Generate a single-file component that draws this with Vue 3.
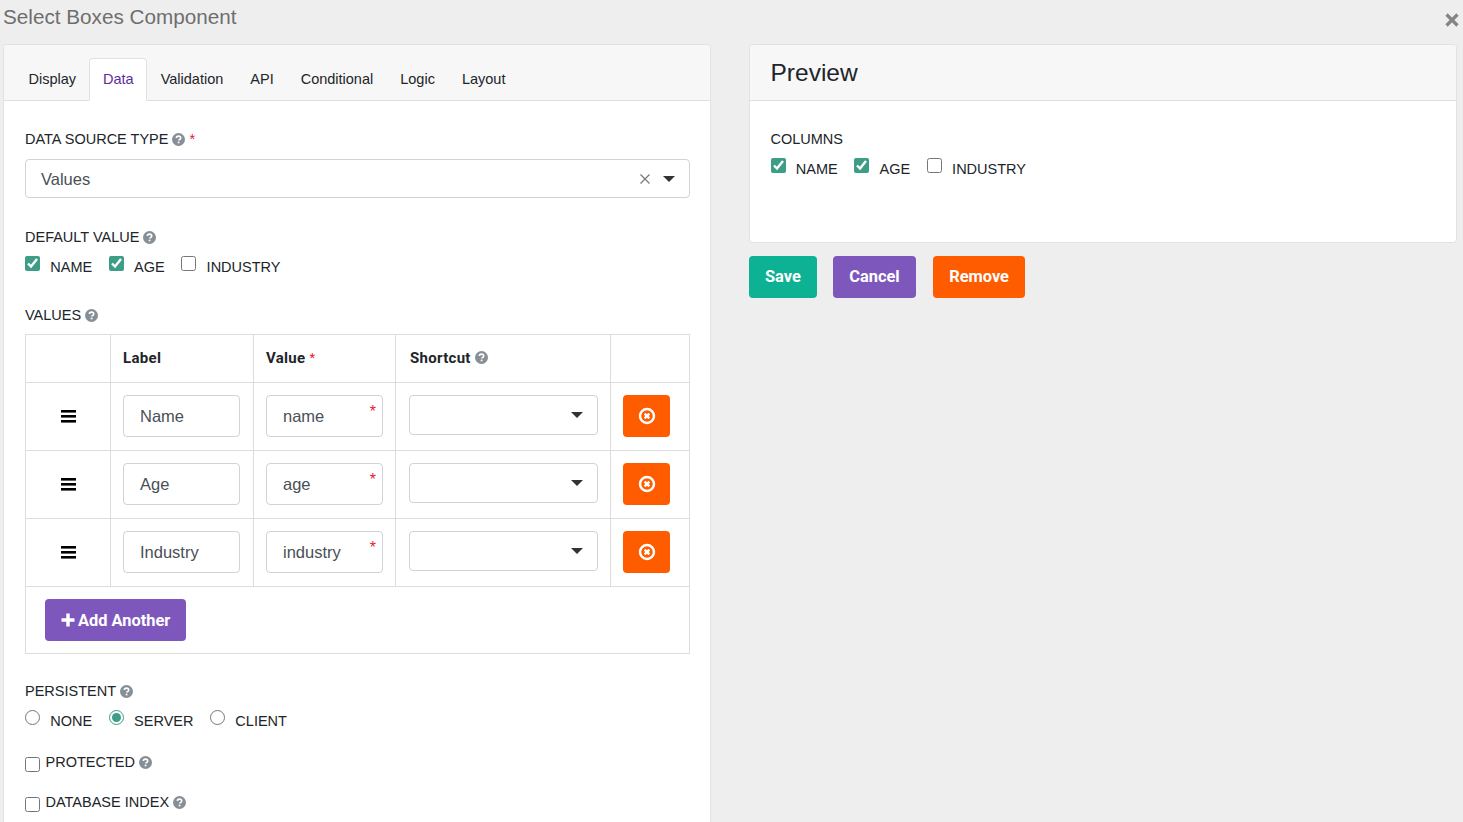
<template>
  <div class="page">
    <div class="title_row">
      <h4 class="title">Select Boxes Component</h4>
      <svg class="close_icon" viewBox="0 0 14 14"><path d="M1.5 1.5l11 11M12.5 1.5l-11 11" /></svg>
    </div>

    <div class="columns">
      <div class="card edit_card">
        <div class="tabs">
          <a class="tab" :class="{ active: t == 'Data' }" v-for="t in tabs">{{ t }}</a>
        </div>
        <div class="card_body">
          <div class="field_label first">DATA SOURCE TYPE <svg class="help" viewBox="0 0 16 16"><circle cx="8" cy="8" r="8" /><path d="M5.4 6.2c0-1.6 1.2-2.4 2.7-2.4s2.6.9 2.6 2.2c0 1-.6 1.5-1.3 2-.6.4-.9.7-.9 1.3" /><rect x="7" y="10.6" width="2.2" height="2.1" /></svg> <span class="req">*</span></div>
          <div class="source_select">
            <span>Values</span>
            <svg class="clear" viewBox="0 0 12 12"><path d="M1.5 1.5l9 9M10.5 1.5l-9 9" /></svg>
            <i class="caret"></i>
          </div>

          <div class="field_label default_label">DEFAULT VALUE <svg class="help" viewBox="0 0 16 16"><circle cx="8" cy="8" r="8" /><path d="M5.4 6.2c0-1.6 1.2-2.4 2.7-2.4s2.6.9 2.6 2.2c0 1-.6 1.5-1.3 2-.6.4-.9.7-.9 1.3" /><rect x="7" y="10.6" width="2.2" height="2.1" /></svg></div>
          <div class="check_row">
            <label class="check" v-for="c in columns">
              <input type="checkbox" :checked="c.on" />
              <span>{{ c.label }}</span>
            </label>
          </div>

          <div class="field_label values_label">VALUES <svg class="help" viewBox="0 0 16 16"><circle cx="8" cy="8" r="8" /><path d="M5.4 6.2c0-1.6 1.2-2.4 2.7-2.4s2.6.9 2.6 2.2c0 1-.6 1.5-1.3 2-.6.4-.9.7-.9 1.3" /><rect x="7" y="10.6" width="2.2" height="2.1" /></svg></div>
          <table class="values_table">
            <colgroup>
              <col style="width: 85px" />
              <col style="width: 143px" />
              <col style="width: 142px" />
              <col style="width: 215px" />
              <col style="width: 79px" />
            </colgroup>
            <thead>
              <tr>
                <th></th>
                <th>Label</th>
                <th>Value <span class="req">*</span></th>
                <th>Shortcut <svg class="help" viewBox="0 0 16 16"><circle cx="8" cy="8" r="8" /><path d="M5.4 6.2c0-1.6 1.2-2.4 2.7-2.4s2.6.9 2.6 2.2c0 1-.6 1.5-1.3 2-.6.4-.9.7-.9 1.3" /><rect x="7" y="10.6" width="2.2" height="2.1" /></svg></th>
                <th></th>
              </tr>
            </thead>
            <tbody>
              <tr v-for="r in rows">
                <td class="drag">
                  <svg class="bars" viewBox="0 0 15 13"><rect y="0" width="15" height="2.6" /><rect y="5" width="15" height="2.6" /><rect y="10" width="15" height="2.6" /></svg>
                </td>
                <td><div class="text_input">{{ r.label }}</div></td>
                <td><div class="text_input">{{ r.value }}<span class="req input_req">*</span></div></td>
                <td><div class="short_select"><i class="caret"></i></div></td>
                <td>
                  <div class="remove_btn">
                    <svg viewBox="0 0 16 16"><circle cx="8" cy="8" r="6.2" /><path d="M5.9 5.9l4.2 4.2M10.1 5.9l-4.2 4.2" /></svg>
                  </div>
                </td>
              </tr>
              <tr>
                <td class="add_cell" colspan="5">
                  <button class="btn add_btn"><svg viewBox="0 0 14 14"><path d="M7 .5v13M.5 7h13" /></svg>Add Another</button>
                </td>
              </tr>
            </tbody>
          </table>

          <div class="field_label persist_label">PERSISTENT <svg class="help" viewBox="0 0 16 16"><circle cx="8" cy="8" r="8" /><path d="M5.4 6.2c0-1.6 1.2-2.4 2.7-2.4s2.6.9 2.6 2.2c0 1-.6 1.5-1.3 2-.6.4-.9.7-.9 1.3" /><rect x="7" y="10.6" width="2.2" height="2.1" /></svg></div>
          <div class="check_row radio_row">
            <label class="check" v-for="p in persist">
              <input type="radio" name="persist" :checked="p == 'SERVER'" />
              <span>{{ p }}</span>
            </label>
          </div>

          <label class="solo_check protected">
            <input type="checkbox" />
            <span>PROTECTED <svg class="help" viewBox="0 0 16 16"><circle cx="8" cy="8" r="8" /><path d="M5.4 6.2c0-1.6 1.2-2.4 2.7-2.4s2.6.9 2.6 2.2c0 1-.6 1.5-1.3 2-.6.4-.9.7-.9 1.3" /><rect x="7" y="10.6" width="2.2" height="2.1" /></svg></span>
          </label>
          <label class="solo_check">
            <input type="checkbox" />
            <span>DATABASE INDEX <svg class="help" viewBox="0 0 16 16"><circle cx="8" cy="8" r="8" /><path d="M5.4 6.2c0-1.6 1.2-2.4 2.7-2.4s2.6.9 2.6 2.2c0 1-.6 1.5-1.3 2-.6.4-.9.7-.9 1.3" /><rect x="7" y="10.6" width="2.2" height="2.1" /></svg></span>
          </label>
        </div>
      </div>

      <div class="right_col">
        <div class="card preview_card">
          <div class="preview_head">Preview</div>
          <div class="card_body">
            <div class="field_label first">COLUMNS</div>
            <div class="check_row preview_row">
              <label class="check" v-for="c in columns">
                <input type="checkbox" :checked="c.on" />
                <span>{{ c.label }}</span>
              </label>
            </div>
          </div>
        </div>
        <div class="actions">
          <button class="btn save">Save</button>
          <button class="btn cancel">Cancel</button>
          <button class="btn remove">Remove</button>
        </div>
      </div>
    </div>
  </div>
</template>

<script setup>
const tabs = ['Display', 'Data', 'Validation', 'API', 'Conditional', 'Logic', 'Layout']

const columns = [
  { label: 'NAME', on: true },
  { label: 'AGE', on: true },
  { label: 'INDUSTRY', on: false }
]

const rows = [
  { label: 'Name', value: 'name' },
  { label: 'Age', value: 'age' },
  { label: 'Industry', value: 'industry' }
]

const persist = ['NONE', 'SERVER', 'CLIENT']
</script>

<style>
html, body {
  margin: 0;
  background: #eeeeee;
  overflow: hidden;
}
</style>

<style scoped>
* {
  box-sizing: border-box;
}

.page {
  height: 822px;
  overflow: hidden;
  background: #eeeeee;
  padding-left: 3px;
  font-family: "Liberation Sans", Arial, sans-serif;
  font-size: 14.5px;
  line-height: 21px;
  color: #212529;
}

.title_row {
  height: 44px;
  display: flex;
  justify-content: space-between;
}

.title {
  margin: 0;
  font-size: 20.7px;
  line-height: 34px;
  font-weight: 400;
  color: #6e6e6e;
}

.close_icon {
  width: 14px;
  height: 14px;
  margin: 13px 4px 0 0;
  fill: none;
  stroke: #858585;
  stroke-width: 3.2;
}

.columns {
  display: flex;
  gap: 38px;
}

.card {
  width: 708px;
  background: #fff;
  border: 1px solid #e2e2e2;
  border-radius: 4px;
}

.tabs {
  height: 56px;
  padding: 13px 0 0 11px;
  display: flex;
  background: #f7f7f7;
  border-bottom: 1px solid #dfdfdf;
  border-radius: 4px 4px 0 0;
}

.tab {
  height: 43px;
  padding: 0 12.5px;
  line-height: 41px;
  border: 1px solid transparent;
  color: #212529;
}

.tab.active {
  margin-left: -1px;
  padding-left: 13.5px;
  background: #fff;
  color: #5a2d9c;
  border-color: #e2e2e2 #e2e2e2 #fff;
  border-radius: 4px 4px 0 0;
}

.card_body {
  padding: 27px 20px 40px 21px;
}

.preview_card .card_body {
  padding: 27px 20px 0 20.5px;
}

.field_label {
  height: 21px;
  padding-top: 1px;
}

.req {
  color: #e8202f;
}

.help {
  width: 13px;
  height: 13px;
  vertical-align: -1.5px;
  fill: #868e96;
}

.help path {
  fill: none;
  stroke: #fff;
  stroke-width: 2;
}

.help rect {
  fill: #fff;
}

.source_select {
  margin-top: 10px;
  height: 39px;
  width: 665px;
  padding: 1px 14px 0 15px;
  display: flex;
  align-items: center;
  font-size: 16.5px;
  color: #495057;
  border: 1px solid #ced4da;
  border-radius: 4px;
}

.source_select span {
  flex: 1;
}

.clear {
  width: 12px;
  height: 12px;
  margin: 0 12px 1px 0;
  fill: none;
  stroke: #7a7a7a;
  stroke-width: 1.3;
}

.caret {
  display: block;
  width: 0;
  height: 0;
  border-style: solid;
  border-width: 6px 6px 0;
  border-color: #333 transparent transparent;
}

.source_select .caret {
  margin-bottom: 1px;
}

.default_label {
  margin-top: 28px;
}

.check_row {
  height: 26px;
  margin-top: 9px;
  display: flex;
  gap: 16.6px;
}

.check {
  display: flex;
  align-items: flex-start;
}

.check input,
.solo_check input {
  width: 15px;
  height: 15px;
  margin: 0;
  accent-color: #3d9d87;
}

.check span {
  margin: 1px 0 0 10.3px;
}

.values_label {
  margin-top: 22px;
}

.values_table {
  margin-top: 9px;
  width: 664px;
  table-layout: fixed;
  border-collapse: collapse;
}

.values_table th,
.values_table td {
  border: 1px solid #dddddd;
  padding: 12px;
  vertical-align: top;
}

.values_table th {
  height: 48px;
  padding: 0 12px 1px;
  vertical-align: middle;
  text-align: left;
  font-family: Roboto, sans-serif;
  font-size: 15px;
  letter-spacing: .3px;
  font-weight: 700;
}

.values_table th:nth-child(4) {
  padding-left: 14px;
}

.values_table th .req {
  font-size: 13px;
  font-weight: 400;
  vertical-align: 1px;
}

.values_table td {
  height: 68px;
}

.values_table .drag {
  vertical-align: middle;
}

.bars {
  display: block;
  margin: 0 auto;
  width: 15px;
  height: 13px;
}

.text_input {
  position: relative;
  height: 42px;
  width: 117px;
  padding-left: 16px;
  line-height: 41px;
  font-size: 16.5px;
  color: #495057;
  border: 1px solid #ced4da;
  border-radius: 4px;
}

.input_req {
  position: absolute;
  top: 5px;
  right: 6px;
  line-height: 21px;
  font-size: 16px;
}

.short_select {
  height: 40px;
  width: 189px;
  margin-left: 1px;
  display: flex;
  align-items: center;
  justify-content: flex-end;
  padding-right: 14px;
  border: 1px solid #ced4da;
  border-radius: 4px;
}

.remove_btn {
  width: 47px;
  height: 42px;
  display: flex;
  align-items: center;
  justify-content: center;
  background: #ff5c00;
  border-radius: 4px;
}

.remove_btn svg {
  width: 18px;
  height: 18px;
  fill: none;
  stroke: #fff;
  stroke-width: 2.2;
}

.values_table .add_cell {
  height: 67px;
  padding: 12px 19px;
}

.btn {
  height: 42px;
  padding: 0 16px 2px;
  border: 0;
  border-radius: 4px;
  font-family: Roboto, sans-serif;
  font-size: 16.4px;
  font-weight: 700;
  color: #fff;
}

.add_btn {
  display: block;
  padding-bottom: 0;
  background: #7e57bd;
}

.add_btn svg {
  width: 14px;
  height: 14px;
  margin-right: 3px;
  vertical-align: -1px;
  fill: none;
  stroke: #fff;
  stroke-width: 3.4;
}

.persist_label {
  margin-top: 26px;
}

.radio_row {
  margin-top: 9px;
}

.solo_check {
  display: flex;
  align-items: flex-start;
  height: 21px;
  margin-top: 19px;
}

.solo_check input {
  margin-top: 5px;
}

.solo_check span {
  margin-left: 5.5px;
}

.protected {
  margin-top: 16px;
}

.preview_card {
  height: 199px;
}

.preview_head {
  height: 56px;
  padding-left: 20.5px;
  line-height: 55px;
  font-size: 24.5px;
  background: #f7f7f7;
  border-bottom: 1px solid #dfdfdf;
  border-radius: 4px 4px 0 0;
}

.preview_row {
  margin-top: 9px;
}

.actions {
  display: flex;
  gap: 16.5px;
  margin-top: 13px;
}

.save {
  background: #0db194;
}

.cancel {
  background: #7e57bd;
}

.remove {
  margin-left: 1px;
  background: #ff5c00;
}
</style>
